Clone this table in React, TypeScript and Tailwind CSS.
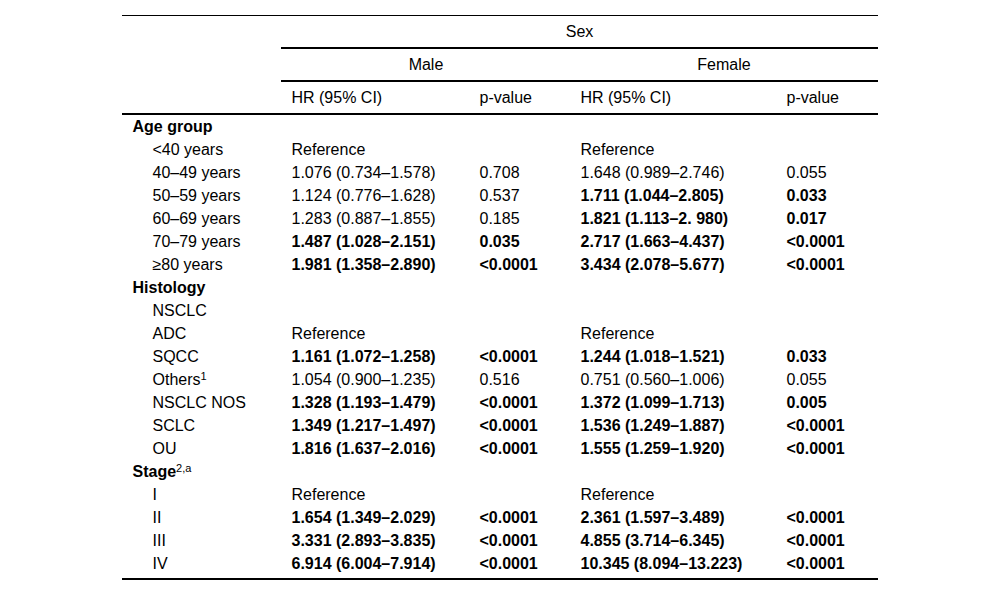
type Row =
  | { kind: "group"; label: string; sup?: string }
  | {
      kind: "item";
      label: string;
      sup?: string;
      male?: [string, string];
      female?: [string, string];
      maleBold?: boolean;
      femaleBold?: boolean;
    };

const rows: Row[] = [
  { kind: "group", label: "Age group" },
  { kind: "item", label: "<40 years", male: ["Reference", ""], female: ["Reference", ""] },
  { kind: "item", label: "40–49 years", male: ["1.076 (0.734–1.578)", "0.708"], female: ["1.648 (0.989–2.746)", "0.055"] },
  { kind: "item", label: "50–59 years", male: ["1.124 (0.776–1.628)", "0.537"], female: ["1.711 (1.044–2.805)", "0.033"], femaleBold: true },
  { kind: "item", label: "60–69 years", male: ["1.283 (0.887–1.855)", "0.185"], female: ["1.821 (1.113–2. 980)", "0.017"], femaleBold: true },
  { kind: "item", label: "70–79 years", male: ["1.487 (1.028–2.151)", "0.035"], female: ["2.717 (1.663–4.437)", "<0.0001"], maleBold: true, femaleBold: true },
  { kind: "item", label: "≥80 years", male: ["1.981 (1.358–2.890)", "<0.0001"], female: ["3.434 (2.078–5.677)", "<0.0001"], maleBold: true, femaleBold: true },
  { kind: "group", label: "Histology" },
  { kind: "item", label: "NSCLC" },
  { kind: "item", label: "ADC", male: ["Reference", ""], female: ["Reference", ""] },
  { kind: "item", label: "SQCC", male: ["1.161 (1.072–1.258)", "<0.0001"], female: ["1.244 (1.018–1.521)", "0.033"], maleBold: true, femaleBold: true },
  { kind: "item", label: "Others", sup: "1", male: ["1.054 (0.900–1.235)", "0.516"], female: ["0.751 (0.560–1.006)", "0.055"] },
  { kind: "item", label: "NSCLC NOS", male: ["1.328 (1.193–1.479)", "<0.0001"], female: ["1.372 (1.099–1.713)", "0.005"], maleBold: true, femaleBold: true },
  { kind: "item", label: "SCLC", male: ["1.349 (1.217–1.497)", "<0.0001"], female: ["1.536 (1.249–1.887)", "<0.0001"], maleBold: true, femaleBold: true },
  { kind: "item", label: "OU", male: ["1.816 (1.637–2.016)", "<0.0001"], female: ["1.555 (1.259–1.920)", "<0.0001"], maleBold: true, femaleBold: true },
  { kind: "group", label: "Stage", sup: "2,a" },
  { kind: "item", label: "I", male: ["Reference", ""], female: ["Reference", ""] },
  { kind: "item", label: "II", male: ["1.654 (1.349–2.029)", "<0.0001"], female: ["2.361 (1.597–3.489)", "<0.0001"], maleBold: true, femaleBold: true },
  { kind: "item", label: "III", male: ["3.331 (2.893–3.835)", "<0.0001"], female: ["4.855 (3.714–6.345)", "<0.0001"], maleBold: true, femaleBold: true },
  { kind: "item", label: "IV", male: ["6.914 (6.004–7.914)", "<0.0001"], female: ["10.345 (8.094–13.223)", "<0.0001"], maleBold: true, femaleBold: true },
];

export default function App() {
  return (
    <div className="min-h-[596px] w-full bg-white pt-[15px] font-['Liberation_Sans',Arial,sans-serif] text-[16px] text-black">
      <table className="mx-auto w-[755px] table-fixed border-separate border-spacing-0 border-t border-b-2 border-black">
        <colgroup>
          <col className="w-[159px]" />
          <col className="w-[188px]" />
          <col className="w-[101px]" />
          <col className="w-[206px]" />
          <col className="w-[101px]" />
        </colgroup>
        <thead>
          <tr>
            <th rowSpan={3} className="border-b-2 border-black p-0" />
            <th colSpan={4} className="h-[33px] border-b-2 border-black p-0 text-center font-normal leading-[23px]">
              Sex
            </th>
          </tr>
          <tr>
            <th colSpan={2} className="h-[33px] border-b-2 border-black p-0 text-center font-normal leading-[23px]">
              Male
            </th>
            <th colSpan={2} className="h-[33px] border-b-2 border-black p-0 text-center font-normal leading-[23px]">
              Female
            </th>
          </tr>
          <tr>
            <th className="h-[33px] border-b-2 border-black p-0 pl-[10px] text-left font-normal leading-[23px]">HR (95% CI)</th>
            <th className="h-[33px] border-b-2 border-black p-0 pl-[10px] text-left font-normal leading-[23px]">p-value</th>
            <th className="h-[33px] border-b-2 border-black p-0 pl-[10px] text-left font-normal leading-[23px]">HR (95% CI)</th>
            <th className="h-[33px] border-b-2 border-black p-0 pl-[10px] text-left font-normal leading-[23px]">p-value</th>
          </tr>
        </thead>
        <tbody>
          {rows.map((row, i) => {
            const last = i === rows.length - 1;
            const cell = last ? "p-0 pb-[3px] leading-[23px] whitespace-nowrap" : "p-0 leading-[23px] whitespace-nowrap";
            if (row.kind === "group") {
              return (
                <tr key={row.label}>
                  <td className={`${cell} pl-[10px] font-bold`}>
                    {row.label}
                    {row.sup ? <sup className="text-[11px] font-normal">{row.sup}</sup> : null}
                  </td>
                  <td className={cell} />
                  <td className={cell} />
                  <td className={cell} />
                  <td className={cell} />
                </tr>
              );
            }
            return (
              <tr key={row.label}>
                <td className={`${cell} pl-[30px]`}>
                  {row.label}
                  {row.sup ? <sup className="text-[11px]">{row.sup}</sup> : null}
                </td>
                <td className={`${cell} pl-[10px] ${row.maleBold ? "font-bold" : ""}`}>{row.male?.[0]}</td>
                <td className={`${cell} pl-[10px] ${row.maleBold ? "font-bold" : ""}`}>{row.male?.[1]}</td>
                <td className={`${cell} pl-[10px] ${row.femaleBold ? "font-bold" : ""}`}>{row.female?.[0]}</td>
                <td className={`${cell} pl-[10px] ${row.femaleBold ? "font-bold" : ""}`}>{row.female?.[1]}</td>
              </tr>
            );
          })}
        </tbody>
      </table>
    </div>
  );
}
